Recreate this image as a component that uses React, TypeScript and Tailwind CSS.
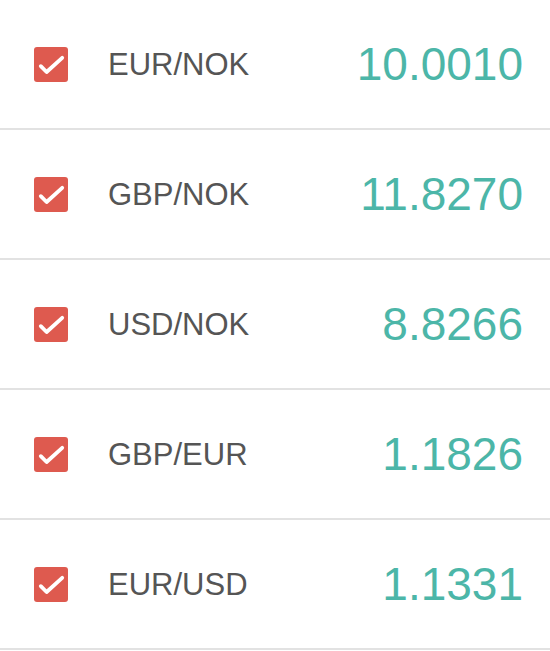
import React from 'react';

interface Rate {
  pair: string;
  value: string;
}

const rates: Rate[] = [
  { pair: 'EUR/NOK', value: '10.0010' },
  { pair: 'GBP/NOK', value: '11.8270' },
  { pair: 'USD/NOK', value: '8.8266' },
  { pair: 'GBP/EUR', value: '1.1826' },
  { pair: 'EUR/USD', value: '1.1331' },
];

const CheckBox = () => (
  <div className="w-[34px] h-[35px] shrink-0 rounded-[3px] bg-[#de5a4f] flex items-center justify-center">
    <svg width="34" height="35" viewBox="0 0 34 35" fill="none">
      <path
        d="M6.8 19.2 L12.6 25 L28.2 10.8"
        stroke="white"
        strokeWidth="3.8"
        strokeLinecap="round"
        strokeLinejoin="round"
      />
    </svg>
  </div>
);

export default function App() {
  return (
    <div className="w-[550px] bg-white font-['Liberation_Sans',Arial,sans-serif]">
      {rates.map((r) => (
        <div
          key={r.pair}
          className="h-[130px] flex items-center pl-[34px] pr-[27px] border-b-2 border-[#e2e2e2]"
        >
          <CheckBox />
          <span className="ml-[40px] text-[31px] text-[#555555] leading-none">{r.pair}</span>
          <span className="ml-auto text-[46px] text-[#4cb6a8] leading-none">{r.value}</span>
        </div>
      ))}
    </div>
  );
}
